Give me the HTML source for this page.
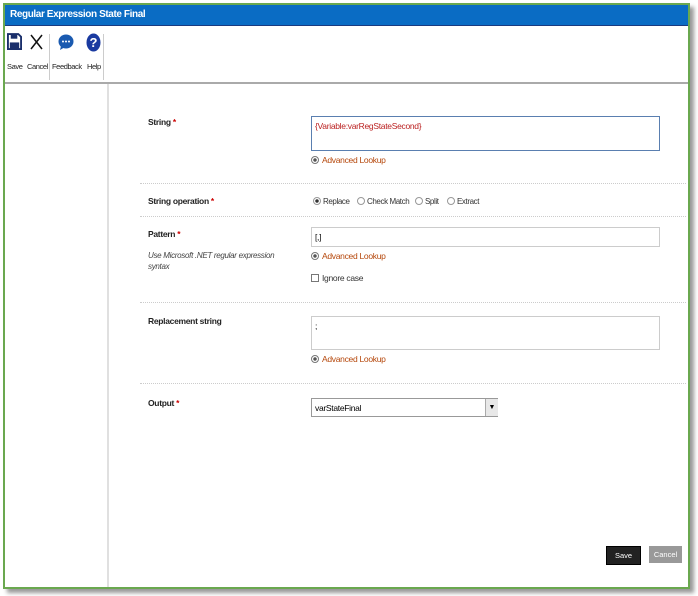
<!DOCTYPE html>
<html><head><style>
body{margin:0;width:698px;height:596px;background:#fff;font-family:"Liberation Sans",sans-serif;position:relative;overflow:hidden}
#f{position:absolute;left:3px;top:3px;width:683px;height:582px;border:2px solid #6aa84f;box-shadow:4px 4px 4px #999;background:#fff}
#t{position:absolute;left:0;top:0;right:0;height:20px;background:#0a6cc4;border-bottom:1px solid #1a3a80;color:#fff;font-weight:bold;font-size:10px;line-height:20px;padding-left:5px;letter-spacing:-0.4px}
#tb{position:absolute;left:0;top:21px;right:0;height:56px;border-bottom:2px solid #aaa}
.b{position:absolute;top:36px;font-size:7.5px;color:#222;letter-spacing:-0.4px}
.sep{position:absolute;top:8px;width:1px;height:46px;background:#ccc}
#lp{position:absolute;left:102px;top:79px;bottom:0;width:2px;background:#e0e0e0}
.l{position:absolute;font-size:8.5px;font-weight:bold;color:#222;letter-spacing:-0.3px}
.l i{color:#c00;font-style:normal}
.in{position:absolute;border:1px solid #ccc;background:#fff;font-size:8.5px;padding:4px 3px;box-sizing:border-box;letter-spacing:-0.3px}
.al{position:absolute;font-size:8.5px;color:#b5470b;letter-spacing:-0.3px}
.al:before{content:"";display:inline-block;width:6px;height:6px;border:1px solid #777;border-radius:50%;margin-right:3px;vertical-align:-1px;background:radial-gradient(#555 1.5px,transparent 2px)}
.hr{position:absolute;left:135px;right:2px;border-top:1px dotted #ccc}
.r{position:absolute;top:192px;font-size:8px;color:#333;letter-spacing:-0.4px;white-space:nowrap}
.r:before{content:"";display:inline-block;width:6px;height:6px;border:1px solid #999;border-radius:50%;margin-right:2px;vertical-align:-1px}
.r.on:before{background:radial-gradient(#333 1.5px,transparent 2px)}
.btn{position:absolute;top:541px;width:33px;height:17px;font-size:7.5px;color:#fff;text-align:center;line-height:17px}
</style></head><body>
<div id="f">
<div id="t">Regular Expression State Final</div>
<div id="tb">
<svg style="position:absolute;left:2px;top:7px" width="15" height="17" viewBox="0 0 16 18"><path d="M1 1h11l3 3v13H1z" fill="none" stroke="#1a2f6b" stroke-width="2"/><rect x="4" y="1" width="7" height="5" fill="#1a2f6b"/><rect x="3" y="10" width="10" height="7" fill="#1a2f6b"/></svg>
<svg style="position:absolute;left:25px;top:8px" width="13" height="16"><path d="M1 1L12 15M12 1L1 15" stroke="#111" stroke-width="1.5"/></svg>
<div class="sep" style="left:44px"></div>
<svg style="position:absolute;left:53px;top:8px" width="16" height="17"><ellipse cx="8" cy="7.5" rx="7.5" ry="7" fill="#1a5ab0"/><path d="M3 12l-1 4 5-3z" fill="#1a5ab0"/><circle cx="5" cy="7.5" r="1" fill="#fff"/><circle cx="8" cy="7.5" r="1" fill="#fff"/><circle cx="11" cy="7.5" r="1" fill="#fff"/></svg>
<svg style="position:absolute;left:81px;top:7px" width="15" height="19"><ellipse cx="7.5" cy="9.5" rx="7" ry="9" fill="#1a3aa0"/><text x="7.5" y="14" font-size="13" font-weight="bold" fill="#fff" text-anchor="middle" font-family="Liberation Sans">?</text></svg>
<div class="sep" style="left:98px"></div>
<span class="b" style="left:2px">Save</span><span class="b" style="left:22px">Cancel</span><span class="b" style="left:47px">Feedback</span><span class="b" style="left:82px">Help</span>
</div>
<div id="lp"></div>
<div class="l" style="left:143px;top:112px">String <i>*</i></div>
<div class="in" style="left:306px;top:111px;width:349px;height:35px;border:1px solid #5a7fb0;color:#b22">{Variable:varRegStateSecond}</div>
<div class="al" style="left:306px;top:150px">Advanced Lookup</div>
<div class="hr" style="top:178px"></div>
<div class="l" style="left:143px;top:191px">String operation <i>*</i></div>
<span class="r on" style="left:308px">Replace</span><span class="r" style="left:352px">Check Match</span><span class="r" style="left:410px">Split</span><span class="r" style="left:442px">Extract</span>
<div class="hr" style="top:211px"></div>
<div class="l" style="left:143px;top:224px">Pattern <i>*</i></div>
<div style="position:absolute;left:143px;top:245px;font-size:8px;font-style:italic;color:#444;width:140px;line-height:11px;letter-spacing:-0.3px">Use Microsoft .NET regular expression syntax</div>
<div class="in" style="left:306px;top:222px;width:349px;height:20px">[,]</div>
<div class="al" style="left:306px;top:246px">Advanced Lookup</div>
<div style="position:absolute;left:306px;top:268px;font-size:8.5px;color:#333;letter-spacing:-0.3px"><span style="display:inline-block;width:6px;height:6px;border:1px solid #777;margin-right:3px;vertical-align:-1px"></span>Ignore case</div>
<div class="hr" style="top:297px"></div>
<div class="l" style="left:143px;top:311px">Replacement string</div>
<div class="in" style="left:306px;top:311px;width:349px;height:34px">;</div>
<div class="al" style="left:306px;top:349px">Advanced Lookup</div>
<div class="hr" style="top:378px"></div>
<div class="l" style="left:143px;top:393px">Output <i>*</i></div>
<div class="in" style="left:306px;top:393px;width:187px;height:19px;border-color:#999">varStateFinal</div>
<div style="position:absolute;left:480px;top:394px;width:12px;height:17px;background:#e8e8e8;border-left:1px solid #aaa;font-size:7px;text-align:center;line-height:17px">▼</div>
<div class="btn" style="left:601px;background:#222;border:1px solid #000">Save</div>
<div class="btn" style="left:644px;background:#999">Cancel</div>
</div>
</body></html>
